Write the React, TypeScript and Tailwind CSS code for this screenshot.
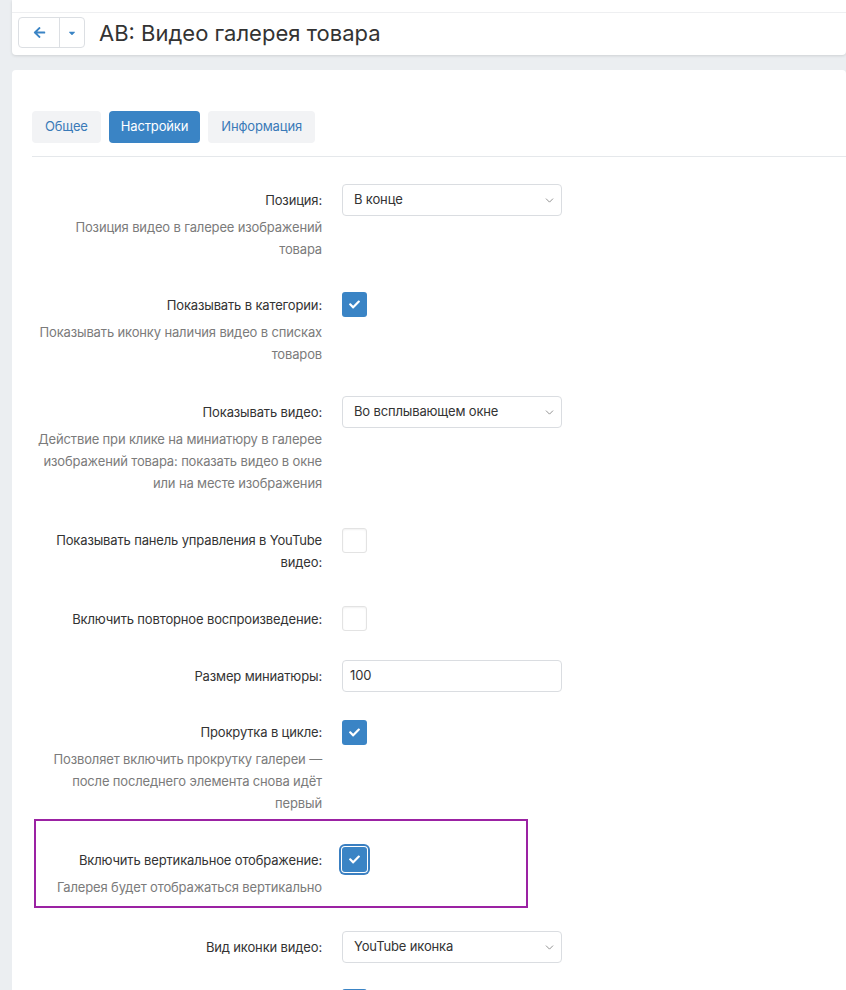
import React from "react";
import { FaArrowLeft, FaCaretDown, FaCheck } from "react-icons/fa";
import { ChevronDown } from "lucide-react";

const font = { fontFamily: "Inter, 'Noto Sans', sans-serif" };

function Select({ value }: { value: string }) {
  return (
    <div className="flex h-[32px] w-[220px] items-center justify-between rounded-[4px] border border-[#dadde1] bg-white pl-[11px] pr-[5px] text-[13px] tracking-[-0.15px] text-[#333]">
      <span>{value}</span>
      <ChevronDown className="h-[13px] w-[13px] text-[#7a7a7a]" strokeWidth={1.5} />
    </div>
  );
}

function Input({ value }: { value: string }) {
  return (
    <div className="flex h-[32px] w-[220px] items-center rounded-[4px] border border-[#dadde1] bg-white pl-[7px] text-[13px] tracking-[-0.15px] text-[#333]">
      {value}
    </div>
  );
}

function Check({ checked, focus }: { checked: boolean; focus?: boolean }) {
  if (checked) {
    return (
      <div
        className={
          focus
            ? "flex h-[25px] w-[25px] items-center justify-center rounded-[3px] bg-[#3a84c5] ring-2 ring-[#3a7fc1] ring-offset-1"
            : "flex h-[25px] w-[25px] items-center justify-center rounded-[3px] bg-[#3a84c5]"
        }
      >
        <FaCheck className="h-[11px] w-[11px] text-white" />
      </div>
    );
  }
  return (
    <div className="h-[25px] w-[25px] rounded-[3px] border border-[#e3e3e3] bg-white shadow-[inset_0_1px_2px_rgba(0,0,0,0.06)]" />
  );
}

function Lines({ lines, className }: { lines: string[]; className: string }) {
  return (
    <div className={className}>
      {lines.map((l, i) => (
        <div key={i} className="whitespace-nowrap">
          {l}
        </div>
      ))}
    </div>
  );
}

function Row({
  label,
  help,
  control,
  labelPt,
  className,
  labelWidth = "w-[290px]",
}: {
  label: string[];
  help?: string[];
  control: React.ReactNode;
  labelPt: string;
  className: string;
  labelWidth?: string;
}) {
  return (
    <div className={`flex ${className}`}>
      <div className={`${labelWidth} shrink-0 text-right tracking-[-0.15px]`}>
        <Lines lines={label} className={`text-[13px] leading-[22px] text-[#333] ${labelPt}`} />
        {help && <Lines lines={help} className="mt-[5px] text-[13px] leading-[22px] text-[#7b7b7b]" />}
      </div>
      <div className="ml-[20px]">{control}</div>
    </div>
  );
}

export default function App() {
  return (
    <div className="h-[990px] w-[846px] overflow-hidden bg-[#ebeef1]" style={font}>
      <div className="ml-[12px] rounded-b-[4px] bg-white shadow-[0_1px_3px_rgba(0,0,0,0.12)]">
        <div className="h-[13px] border-b border-[#eeeff1]" />
        <div className="flex h-[42px] items-start pl-[6px] pt-[4px]">
          <div className="flex h-[31px] rounded-[4px] border border-[#dcdfe3] bg-white">
            <div className="flex w-[41px] items-center justify-center border-r border-[#dcdfe3]">
              <FaArrowLeft className="h-[13px] w-[13px] text-[#3a84c5]" />
            </div>
            <div className="flex w-[24px] items-center justify-center">
              <FaCaretDown className="h-[10px] w-[10px] text-[#3a84c5]" />
            </div>
          </div>
          <div className="ml-[14px] mt-[1px] text-[22px] leading-[30px] text-[#333]">AB: Видео галерея товара</div>
        </div>
      </div>

      <div className="ml-[12px] mt-[15px] h-[1000px] rounded-t-[4px] bg-white pl-[20px] pt-[41px]">
        <div className="flex gap-[8px] text-[13px] tracking-[-0.15px]">
          <div className="flex h-[32px] items-center rounded-[4px] bg-[#f2f3f5] px-[13px] text-[#3a7ab8]">Общее</div>
          <div className="flex h-[32px] items-center rounded-[4px] bg-[#3a84c5] px-[12px] text-white">Настройки</div>
          <div className="flex h-[32px] items-center rounded-[4px] bg-[#f2f3f5] px-[13px] text-[#3a7ab8]">Информация</div>
        </div>
        <div className="mt-[13px] border-t border-[#e5e8eb]" />

        <Row
          className="mt-[27px]"
          labelPt="pt-[5px]"
          label={["Позиция:"]}
          help={["Позиция видео в галерее изображений", "товара"]}
          control={<Select value="В конце" />}
        />
        <Row
          className="mt-[32px]"
          labelPt="pt-[2px]"
          label={["Показывать в категории:"]}
          help={["Показывать иконку наличия видео в списках", "товаров"]}
          control={<Check checked />}
        />
        <Row
          className="mt-[31px]"
          labelPt="pt-[5px]"
          label={["Показывать видео:"]}
          help={[
            "Действие при клике на миниатюру в галерее",
            "изображений товара: показать видео в окне",
            "или на месте изображения",
          ]}
          control={<Select value="Во всплывающем окне" />}
        />
        <Row
          className="mt-[34px]"
          labelPt="pt-[1px]"
          label={["Показывать панель управления в YouTube", "видео:"]}
          control={<Check checked={false} />}
        />
        <Row
          className="mt-[33px]"
          labelPt="pt-[2px]"
          label={["Включить повторное воспроизведение:"]}
          control={<Check checked={false} />}
        />
        <Row
          className="mt-[29px]"
          labelPt="pt-[5px]"
          label={["Размер миниатюры:"]}
          control={<Input value="100" />}
        />
        <Row
          className="mt-[28px]"
          labelPt="pt-[1px]"
          label={["Прокрутка в цикле:"]}
          help={[
            "Позволяет включить прокрутку галереи —",
            "после последнего элемента снова идёт",
            "первый",
          ]}
          control={<Check checked />}
        />
        <div className="ml-[2px] mt-[5px] w-[494px] border-2 border-[#9b22a3] pb-[8px] pt-[26px]">
          <Row
            className=""
            labelWidth="w-[286px]"
            labelPt="pt-[2px]"
            label={["Включить вертикальное отображение:"]}
            help={["Галерея будет отображаться вертикально"]}
            control={<Check checked focus />}
          />
        </div>
        <Row
          className="mt-[23px]"
          labelPt="pt-[5px]"
          label={["Вид иконки видео:"]}
          control={<Select value="YouTube иконка" />}
        />
        <div className="ml-[310px] mt-[26px]">
          <Check checked />
        </div>
      </div>
    </div>
  );
}
